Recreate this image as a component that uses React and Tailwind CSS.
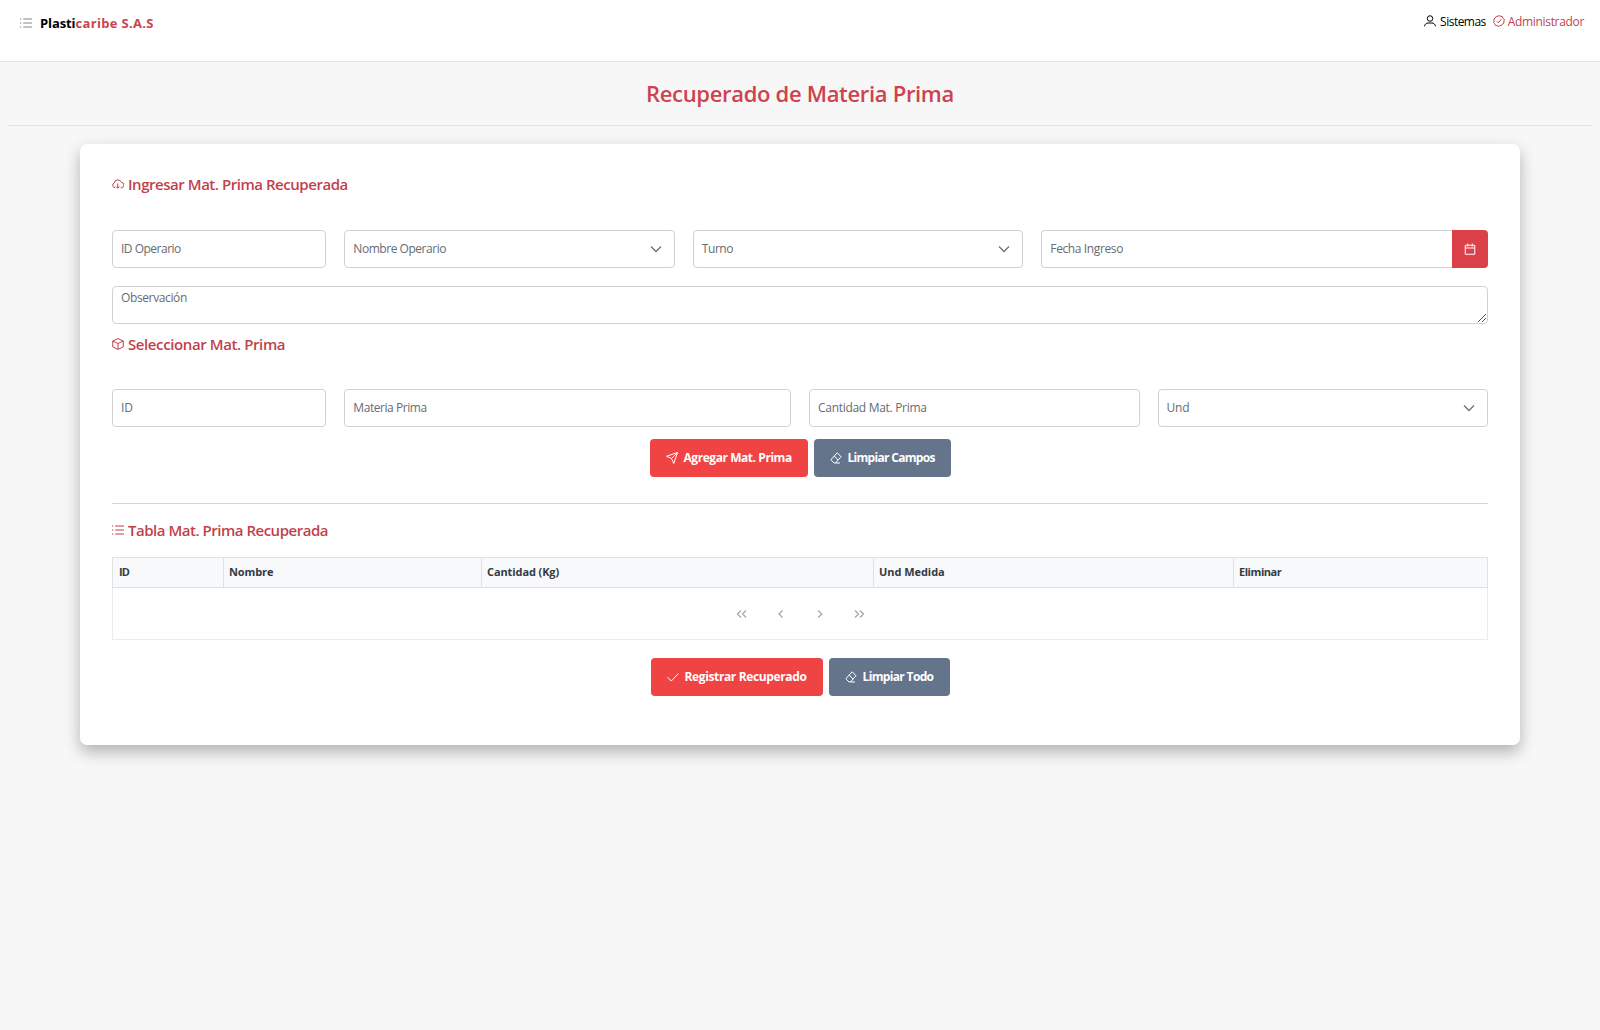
const paths = {
  list: <path d="M6.500 4H24M6.500 12H24M6.500 20H24M0 4h2.500M0 12h2.500M0 20h2.500" />,
  user: <path d="M17.500 7a5.500 5.500 0 1 1-11 0a5.500 5.500 0 1 1 11 0M1 22.500c.8-4.500 4-6.500 7-6.500h8c3 0 6.200 2 7 6.500" />,
  verified: <path d="M12 1l3 1.600 3.600.3 1.400 3.400 2.500 2.700-.8 3.500.3 3.500-3 2-2 3-3.500.2L12 23l-3.200-1.600-3.600-.4-1.700-3.200-2.300-2.800.8-3.500-.3-3.500 3-2.200 1.800-3 3.500-.2zM7.500 12.500l3 3 6-7" />,
  cloud: <path d="M6 19.500a5 5 0 0 1-1.500-9.600a7.500 7.500 0 0 1 14.300-1.400a5.600 5.600 0 0 1 .7 11h-2.500M11.500 11v9.500M8 17l3.500 3.500L15 17" />,
  box: <path d="M12 1.200l10.500 4.800v11.800L12 22.800 1.500 17.800V6zM1.500 6l10.500 5 10.500-5M12 11v11.500" />,
  send: <path d="M23 1L15.500 23 11 13 1 8.500zM23 1L11 13" />,
  eraser: <path d="M14.500 1.500l7.500 8L11 22H8L2.500 16.500v-2zM8.500 8l7.500 8M11 22H20" />,
  check: <path d="M1 12.500l7.500 7.500L23 5" />,
  calendar: <path d="M2.500 4.500h19v18h-19zM2.500 10h19M7.500 1v6M16.500 1v6" />,
  down: <path d="M2 7l10 10L22 7" />,
  left: <path d="M15 5L8 12l7 7" />,
  right: <path d="M8.500 5l7 7-7 7" />,
  first: <path d="M10 5L3 12l7 7M20 5l-7 7 7 7" />,
  last: <path d="M4 5l7 7-7 7M14 5l7 7-7 7" />,
};

function Icon({ name, size = 12, stroke = 2, className = '' }) {
  return (
    <svg width={size} height={size} viewBox="0 0 24 24" fill="none" stroke="currentColor" strokeWidth={stroke} className={`shrink-0 ${className}`}>
      {paths[name]}
    </svg>
  );
}

function Field({ text, span, spacing, dropdown }) {
  return (
    <div className={`${span} flex h-[38px] items-center justify-between rounded-[4px] border border-[#ced2d6] pr-3 pl-2`}>
      <span className={spacing}>{text}</span>
      {dropdown && <Icon name="down" size={12} stroke={2.8} className="text-[#6c757d]" />}
    </div>
  );
}

function Heading({ icon, text, spacing, className = '' }) {
  return (
    <h2 className={`flex h-6 items-center gap-1 text-[15px] font-semibold text-[#c23f4b] ${className}`}>
      <Icon name={icon} size={12} />
      <span className={spacing}>{text}</span>
    </h2>
  );
}

function Button({ icon, text, spacing, className }) {
  return (
    <button className={`flex h-[38px] items-center gap-[6px] rounded-[4px] pl-4 font-bold text-white ${className}`}>
      <Icon name={icon} size={12} />
      <span className={`whitespace-nowrap ${spacing}`}>{text}</span>
    </button>
  );
}

const columns = [
  { title: 'ID', spacing: 'pl-px tracking-[-0.8px]' },
  { title: 'Nombre', spacing: 'tracking-[-0.1px]' },
  { title: 'Cantidad (Kg)', spacing: 'tracking-[-0.1px]' },
  { title: 'Und Medida', spacing: 'tracking-[-0.05px]' },
  { title: 'Eliminar', spacing: 'tracking-[-0.45px]' },
];

export default function App() {
  return (
    <div className="h-[1030px] overflow-hidden bg-[#f7f7f7] font-['Open_Sans',sans-serif] text-[12px] leading-5 text-black">
      <header className="flex h-[62px] items-start justify-between border-b border-[#e5e5e5] bg-white pr-4 pl-5">
        <div className="flex h-[46px] items-center">
          <Icon name="list" size={12} className="text-[#85858a]" />
          <span className="ml-2 text-[13px] font-bold">
            <span className="tracking-[-0.1px]">Plasti</span>
            <span className="tracking-[0.33px] text-[#c8454f]">caribe S.A.S</span>
          </span>
        </div>
        <div className="flex h-[43px] items-center">
          <Icon name="user" size={12} className="-mt-[2px]" />
          <span className="ml-1 tracking-[-0.52px]">Sistemas</span>
          <Icon name="verified" size={12} className="-mt-[2px] ml-[7px] text-[#c23f4b]" />
          <span className="ml-[3px] tracking-[-0.33px] text-[#c23f4b]">Administrador</span>
        </div>
      </header>
      <div className="mx-2 flex h-16 items-center justify-center border-b border-[#e3e3e3] pb-[2px]">
        <h1 className="text-[22px] font-semibold tracking-[-0.32px] text-[#cd434d]">Recuperado de Materia Prima</h1>
      </div>
      <main className="mx-20 mt-[18px] h-[601px] rounded-[7px] bg-white px-8 pt-7 text-[#666c72] shadow-[0_7px_16px_rgba(0,0,0,0.28)]">
        <Heading icon="cloud" text="Ingresar Mat. Prima Recuperada" spacing="tracking-[-0.46px]" />
        <div className="mt-[34px] grid grid-cols-12 gap-[18px]">
          <Field span="col-span-2" text="ID Operario" spacing="tracking-[-0.5px]" />
          <Field span="col-span-3" text="Nombre Operario" spacing="tracking-[-0.46px]" dropdown />
          <Field span="col-span-3" text="Turno" spacing="tracking-[-0.45px]" dropdown />
          <div className="col-span-4 flex">
            <div className="flex h-[38px] flex-1 items-center rounded-l-[4px] border border-r-0 border-[#ced2d6] pl-2">
              <span className="tracking-[-0.38px]">Fecha Ingreso</span>
            </div>
            <div className="flex h-[38px] w-9 items-center justify-center rounded-r-[4px] bg-[#dc4049] text-white">
              <Icon name="calendar" size={12} />
            </div>
          </div>
          <div className="col-span-12 flex h-[38px] items-end justify-between rounded-[4px] border border-[#ced2d6] pl-2">
            <span className="self-start pt-px tracking-[-0.38px]">Observación</span>
            <svg width="10" height="10" viewBox="0 0 10 10" stroke="#555" fill="none">
              <path d="M1 9L9 1M5 9L9 5" />
            </svg>
          </div>
        </div>
        <Heading icon="box" text="Seleccionar Mat. Prima" spacing="tracking-[-0.4px]" className="mt-2" />
        <div className="mt-[33px] grid grid-cols-12 gap-[18px]">
          <Field span="col-span-2" text="ID" spacing="tracking-normal" />
          <Field span="col-span-4" text="Materia Prima" spacing="tracking-[-0.44px]" />
          <Field span="col-span-3" text="Cantidad Mat. Prima" spacing="tracking-[-0.3px]" />
          <Field span="col-span-3" text="Und" spacing="tracking-[-0.2px]" dropdown />
        </div>
        <div className="mt-3 flex justify-center gap-[6px]">
          <Button icon="send" text="Agregar Mat. Prima" spacing="tracking-[-0.44px]" className="w-[158px] bg-[#f04344]" />
          <Button icon="eraser" text="Limpiar Campos" spacing="tracking-[-0.7px]" className="w-[137px] bg-[#64748b]" />
        </div>
        <hr className="mt-[26px] border-[#d2d4d6]" />
        <Heading icon="list" text="Tabla Mat. Prima Recuperada" spacing="tracking-[-0.48px]" className="mt-[14px]" />
        <div className="mt-[15px] grid h-[31px] grid-cols-[111px_258px_392px_360px_255px] border border-[#dee2e6] bg-[#f8f9fb] text-[11px] font-bold text-[#343a40]">
          {columns.map(({ title, spacing }) => (
            <div key={title} className="flex items-center border-r border-[#dee2e6] pb-[2px] pl-[5px] last:border-r-0">
              <span className={spacing}>{title}</span>
            </div>
          ))}
        </div>
        <div className="flex h-[52px] items-center justify-center gap-[27px] border border-t-0 border-[#e9ecef] text-[#a5a7aa]">
          <Icon name="first" stroke={2.6} />
          <Icon name="left" stroke={2.6} />
          <Icon name="right" stroke={2.6} />
          <Icon name="last" stroke={2.6} />
        </div>
        <div className="mt-[18px] flex justify-center gap-[6px]">
          <Button icon="check" text="Registrar Recuperado" spacing="tracking-[-0.37px]" className="w-[172px] bg-[#f04344]" />
          <Button icon="eraser" text="Limpiar Todo" spacing="tracking-[-0.65px]" className="w-[121px] bg-[#64748b]" />
        </div>
      </main>
    </div>
  );
}
